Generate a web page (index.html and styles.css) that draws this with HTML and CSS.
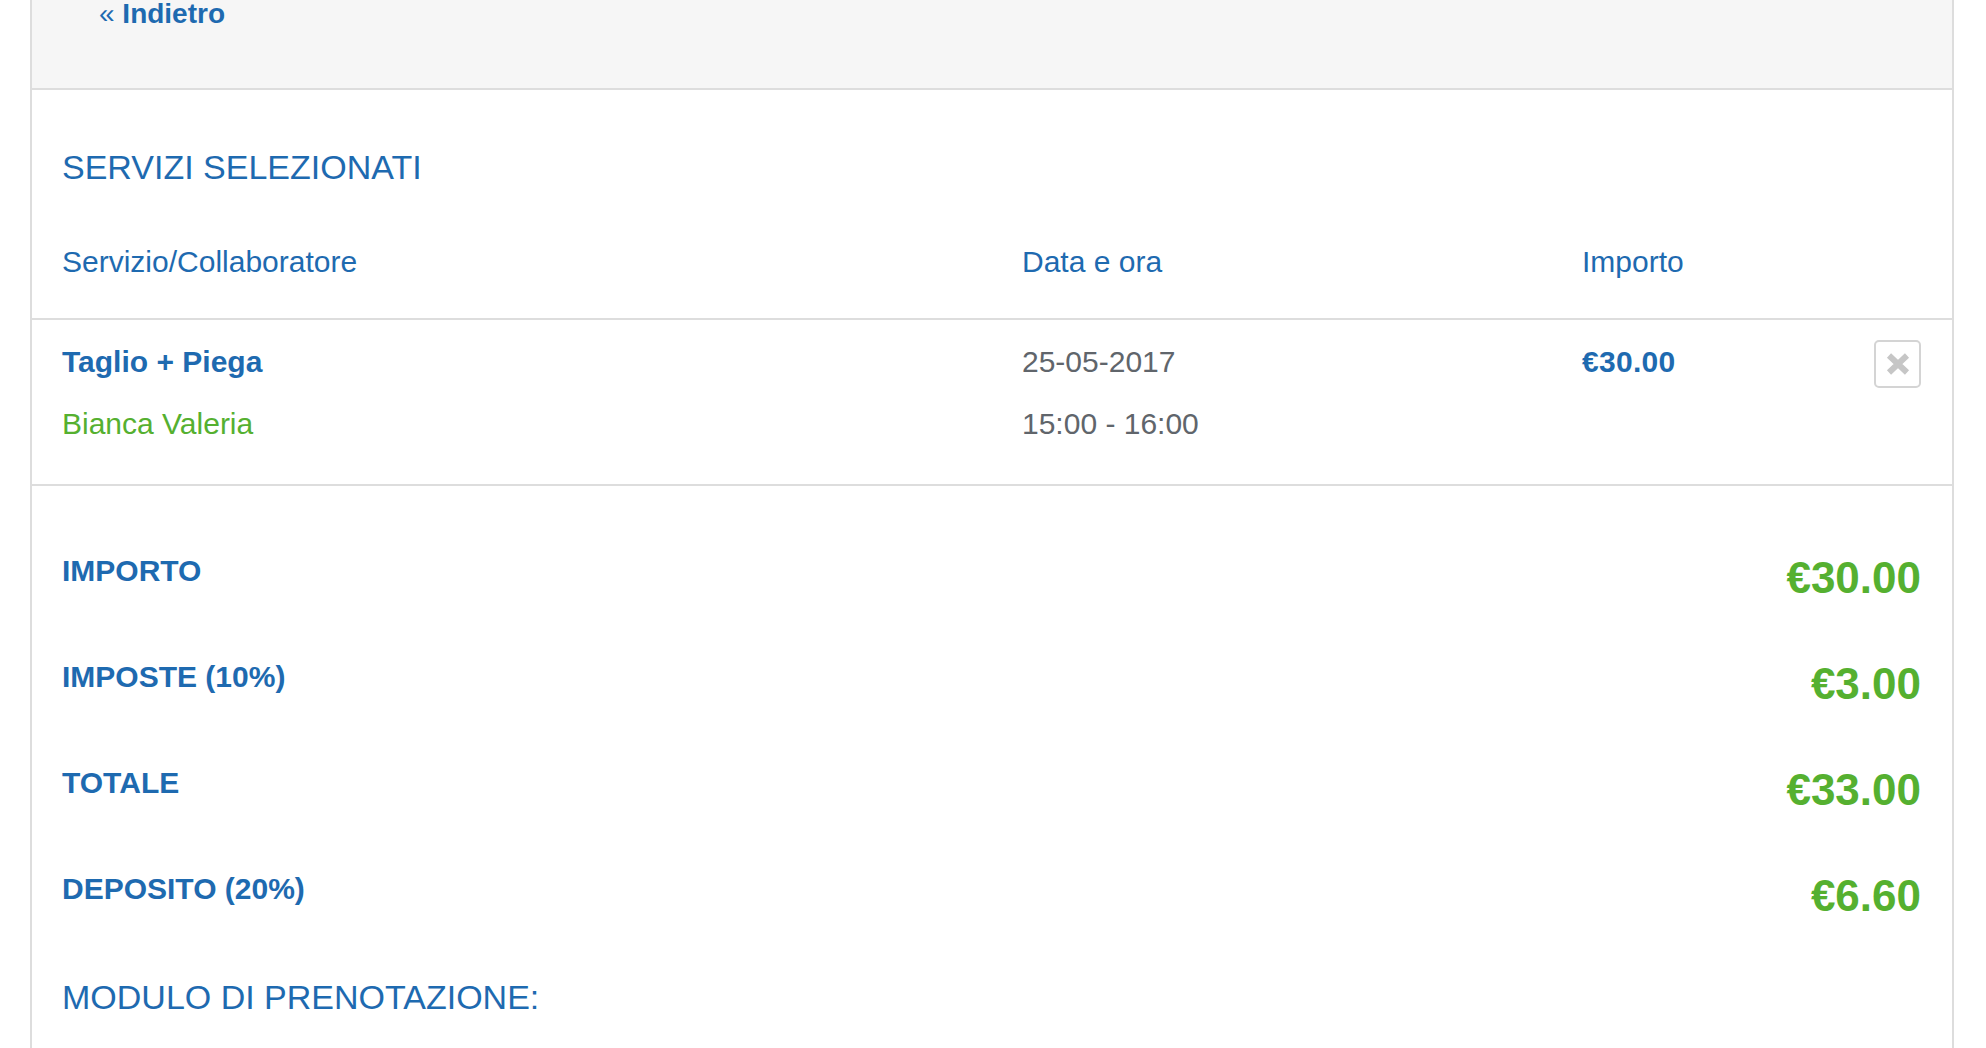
FILE: index.html
```
<!DOCTYPE html>
<html lang="it">
<head>
<meta charset="utf-8">
<title>Servizi selezionati</title>
<link rel="stylesheet" href="styles.css">
</head>
<body>
<div class="panel">
  <div class="panel-head">
    <a class="back" href="#"><span class="raquo">«</span> Indietro</a>
  </div>
  <h2 class="title">SERVIZI SELEZIONATI</h2>
  <div class="grid thead">
    <div>Servizio/Collaboratore</div>
    <div>Data e ora</div>
    <div>Importo</div>
    <div></div>
  </div>
  <div class="grid item">
    <div class="cell">
      <div class="svc">Taglio + Piega</div>
      <div class="staff">Bianca Valeria</div>
    </div>
    <div class="cell when">
      <div>25-05-2017</div>
      <div>15:00 - 16:00</div>
    </div>
    <div class="cell price">€30.00</div>
    <div class="cell act">
      <button class="remove" type="button" aria-label="Rimuovi">
        <svg width="24" height="22" viewBox="0 0 24 22"><path d="M3 2.5 L21 19.5 M21 2.5 L3 19.5" stroke="#c6c6c6" stroke-width="6" stroke-linecap="butt" fill="none"/></svg>
      </button>
    </div>
  </div>
  <div class="summary">
    <div class="sum-row"><div class="sum-label">IMPORTO</div><div class="sum-value">€30.00</div></div>
    <div class="sum-row"><div class="sum-label">IMPOSTE (10%)</div><div class="sum-value">€3.00</div></div>
    <div class="sum-row"><div class="sum-label">TOTALE</div><div class="sum-value">€33.00</div></div>
    <div class="sum-row"><div class="sum-label">DEPOSITO (20%)</div><div class="sum-value">€6.60</div></div>
    <h2 class="title form-title">MODULO DI PRENOTAZIONE:</h2>
  </div>
</div>
</body>
</html>
```
FILE: styles.css
```
html, body {
  margin: 0;
  padding: 0;
  background: #ffffff;
  font-family: "Liberation Sans", Arial, sans-serif;
  color: #1e6ab0;
}

.panel {
  margin-left: 30px;
  width: 1924px;
  min-height: 1048px;
  box-sizing: border-box;
  border-left: 2px solid #dddddd;
  border-right: 2px solid #dddddd;
}

.panel-head {
  height: 88px;
  background: #f6f6f6;
  border-bottom: 2px solid #dddddd;
  padding-left: 67px;
  box-sizing: content-box;
}

.back {
  display: inline-block;
  font-size: 28px;
  line-height: 28px;
  font-weight: bold;
  color: #1e6ab0;
  text-decoration: none;
}

.raquo {
  font-weight: normal;
}

.title {
  margin: 0;
  padding: 57px 30px 0;
  font-size: 34px;
  line-height: 40px;
  font-weight: normal;
  color: #1e6ab0;
}

.grid {
  display: grid;
  grid-template-columns: 960px 560px 1fr 47px;
  padding-left: 30px;
  padding-right: 31px;
  font-size: 30px;
  line-height: 36px;
}

.thead {
  padding-top: 57px;
  padding-bottom: 38px;
  border-bottom: 2px solid #dddddd;
  color: #1e6ab0;
}

.item {
  padding-top: 24px;
  padding-bottom: 42px;
  border-bottom: 2px solid #dddddd;
}

.cell {
  display: flex;
  flex-direction: column;
  gap: 26px;
}

.svc {
  font-weight: bold;
  color: #1e6ab0;
}

.staff {
  color: #55b030;
}

.when {
  color: #60656b;
}

.price {
  font-weight: bold;
  color: #1e6ab0;
  letter-spacing: 0.3px;
}

.act {
  align-items: flex-end;
}

.remove {
  margin-top: -4px;
  width: 47px;
  height: 48px;
  padding: 0;
  border: 2px solid #d4d4d4;
  border-radius: 5px;
  background: #ffffff;
  display: flex;
  align-items: center;
  justify-content: center;
  cursor: pointer;
}

.summary {
  padding-top: 67px;
}

.sum-row {
  display: flex;
  justify-content: space-between;
  align-items: flex-start;
  height: 106px;
  padding-left: 30px;
  padding-right: 31px;
}

.sum-label {
  font-size: 30px;
  line-height: 36px;
  font-weight: bold;
  color: #1e6ab0;
}

.sum-value {
  font-size: 44px;
  line-height: 50px;
  font-weight: bold;
  color: #55b030;
}

.form-title {
  padding-top: 0;
}
```
